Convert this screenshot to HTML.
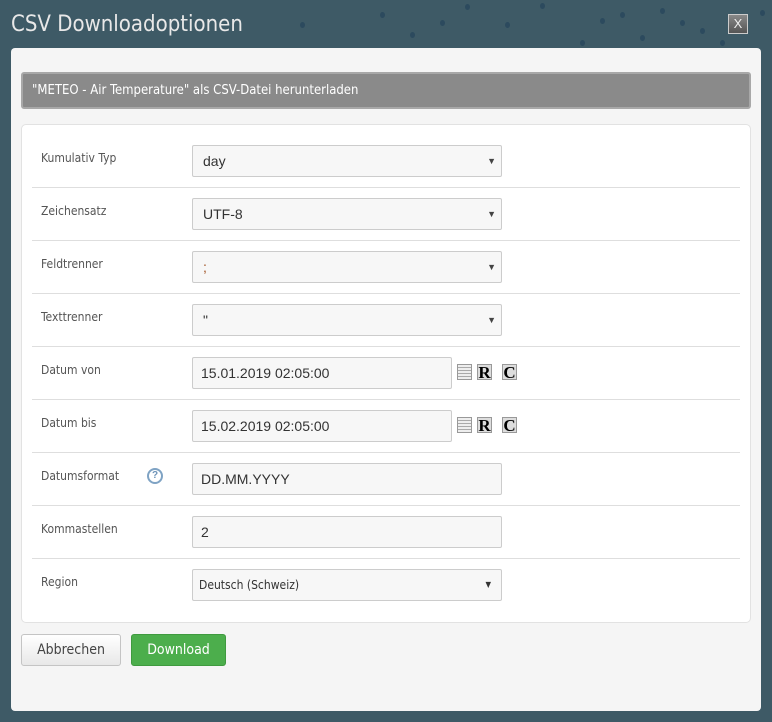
<!DOCTYPE html>
<html><head><meta charset="utf-8"><style>
*{box-sizing:border-box;margin:0;padding:0}
body{width:772px;height:722px;background:#3e5a66;font-family:"Liberation Sans",sans-serif;position:relative;overflow:hidden}
.dot{position:absolute;width:5px;height:6px;border-radius:50%;background:#2c4a5e}
h1{position:absolute;left:11px;top:12px;font-weight:normal;font-size:22px;color:#e8e8e8;font-family:"DejaVu Sans Condensed","Liberation Sans Narrow","Liberation Sans",sans-serif}
.x{position:absolute;left:728px;top:14px;width:20px;height:20px;background:linear-gradient(#888,#555);border:1px solid #ccc;color:#eee;font-size:13px;text-align:center;line-height:18px}
.panel{position:absolute;left:11px;top:48px;width:750px;height:663px;background:#f5f5f5;border-radius:4px}
.bar{position:absolute;left:21px;top:72px;width:730px;height:37px;background:#8a8a8a;border:2px solid #a8a8a8;border-radius:3px;color:#fff;font-size:13px;line-height:33px;padding-left:9px;font-family:"DejaVu Sans Condensed","Liberation Sans Narrow",sans-serif}
.form{position:absolute;left:21px;top:124px;width:730px;height:499px;background:#fff;border:1px solid #e2e2e2;border-radius:5px}
.sep{position:absolute;left:32px;width:708px;height:1px;background:#dedede}
.lbl{position:absolute;left:41px;font-size:12px;color:#555;font-family:"DejaVu Sans Condensed","Liberation Sans Narrow",sans-serif}
.in{position:absolute;left:192px;width:310px;height:32px;background:#f7f7f7;border:1px solid #ccc;border-radius:2px;font-size:14px;color:#333;line-height:30px;padding-left:10px}
.in.s::after{content:"▼";position:absolute;right:5px;top:0;font-size:9px;color:#444}
.ic{position:absolute;width:15px;height:16px;border:1px solid #999;background:#ddd;font-family:"Liberation Serif",serif;font-weight:bold;font-size:17px;line-height:15px;text-align:center;color:#000}
.cal{background:repeating-linear-gradient(0deg,#eee 0 2px,#aaa 2px 3px),#eee}
.btn{position:absolute;top:634px;height:32px;border-radius:3px;font-size:14px;line-height:30px;text-align:center;font-family:"DejaVu Sans Condensed","Liberation Sans Narrow",sans-serif}
</style></head><body>
<div class="dot" style="left:465px;top:4px"></div><div class="dot" style="left:540px;top:3px"></div><div class="dot" style="left:600px;top:18px"></div><div class="dot" style="left:660px;top:8px"></div><div class="dot" style="left:700px;top:28px"></div><div class="dot" style="left:640px;top:35px"></div><div class="dot" style="left:580px;top:40px"></div><div class="dot" style="left:505px;top:22px"></div><div class="dot" style="left:410px;top:32px"></div><div class="dot" style="left:300px;top:22px"></div><div class="dot" style="left:440px;top:20px"></div><div class="dot" style="left:620px;top:12px"></div><div class="dot" style="left:760px;top:10px"></div><div class="dot" style="left:380px;top:12px"></div><div class="dot" style="left:680px;top:20px"></div><div class="dot" style="left:720px;top:40px"></div>
<h1>CSV Downloadoptionen</h1>
<div class="x">X</div>
<div class="panel"></div>
<div class="bar">"METEO - Air Temperature" als CSV-Datei herunterladen</div>
<div class="form"></div>
<div class="sep" style="top:187px"></div><div class="sep" style="top:240px"></div><div class="sep" style="top:293px"></div><div class="sep" style="top:346px"></div><div class="sep" style="top:399px"></div><div class="sep" style="top:452px"></div><div class="sep" style="top:505px"></div><div class="sep" style="top:558px"></div>

<div class="lbl" style="top:151px">Kumulativ Typ</div><div class="in s" style="top:145px">day</div>
<div class="lbl" style="top:204px">Zeichensatz</div><div class="in s" style="top:198px">UTF-8</div>
<div class="lbl" style="top:257px">Feldtrenner</div><div class="in s" style="top:251px;color:#a05020">;</div>
<div class="lbl" style="top:310px">Texttrenner</div><div class="in s" style="top:304px">"</div>
<div class="lbl" style="top:363px">Datum von</div><div class="in" style="top:357px;width:260px;padding-left:8px">15.01.2019 02:05:00</div>
<div class="ic cal" style="left:457px;top:364px"></div><div class="ic" style="left:477px;top:364px">R</div><div class="ic" style="left:502px;top:364px">C</div>
<div class="lbl" style="top:416px">Datum bis</div><div class="in" style="top:410px;width:260px;padding-left:8px">15.02.2019 02:05:00</div>
<div class="ic cal" style="left:457px;top:417px"></div><div class="ic" style="left:477px;top:417px">R</div><div class="ic" style="left:502px;top:417px">C</div>
<div class="lbl" style="top:469px">Datumsformat</div>
<div style="position:absolute;left:147px;top:468px;width:16px;height:16px;border:2px solid #7fa3c4;border-radius:50%;color:#6d93b8;font-size:10px;font-weight:bold;text-align:center;line-height:12px">?</div>
<div class="in" style="top:463px;padding-left:8px">DD.MM.YYYY</div>
<div class="lbl" style="top:522px">Kommastellen</div><div class="in" style="top:516px;padding-left:8px">2</div>
<div class="lbl" style="top:575px">Region</div><div class="in" style="top:569px;padding-left:6px;font-size:12px;font-family:'DejaVu Sans Condensed','Liberation Sans Narrow',sans-serif"><span>Deutsch (Schweiz)</span><span style="position:absolute;right:10px;top:0;font-size:8px">▼</span></div>

<div class="btn" style="left:21px;width:100px;background:linear-gradient(#fff,#e8e8e8);border:1px solid #c4c4c4;color:#444">Abbrechen</div>
<div class="btn" style="left:131px;width:95px;background:#4cae4c;border:1px solid #3f9a3f;color:#fff">Download</div>
</body></html>
